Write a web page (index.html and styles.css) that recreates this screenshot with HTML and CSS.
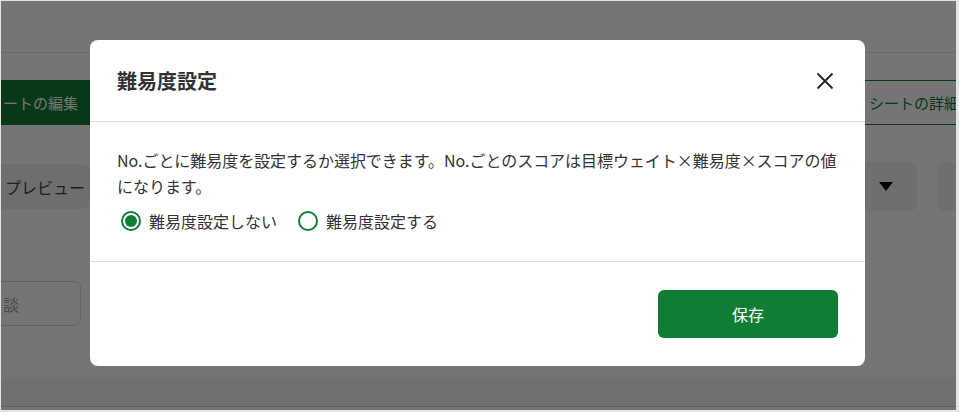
FILE: index.html
```html
<!DOCTYPE html>
<html lang="ja">
<head>
<meta charset="utf-8">
<title>難易度設定</title>
<link rel="stylesheet" href="styles.css">
</head>
<body>
<div class="page">
  <div class="bg">
    <div class="bg-header"></div>
    <div class="bg-tabs">
      <div class="tab tab-edit">ートの編集</div>
      <div class="tab tab-detail">シートの詳細</div>
    </div>
    <div class="bg-row">
      <div class="pill">プレビュー</div>
      <div class="bg-controls">
        <div class="select"><span class="caret"></span></div>
        <div class="box"></div>
      </div>
    </div>
    <div class="bg-input">談</div>
    <div class="bg-footer"></div>
  </div>

  <div class="overlay">
    <div class="modal" role="dialog" aria-labelledby="modal-title">
      <div class="modal-header">
        <h2 class="modal-title" id="modal-title">難易度設定</h2>
        <button class="close" aria-label="閉じる">
          <svg width="18" height="18" viewBox="0 0 18 18" aria-hidden="true">
            <path d="M1.5 1.5 L16.5 16.5 M16.5 1.5 L1.5 16.5" stroke="#222" stroke-width="1.8" fill="none"/>
          </svg>
        </button>
      </div>
      <div class="modal-body">
        <p class="desc">No.ごとに難易度を設定するか選択できます。No.ごとのスコアは目標ウェイト×難易度×スコアの値になります。</p>
        <div class="radios">
          <label class="radio-item"><span class="radio checked"></span><span class="radio-label">難易度設定しない</span></label>
          <label class="radio-item"><span class="radio"></span><span class="radio-label">難易度設定する</span></label>
        </div>
      </div>
      <div class="modal-footer">
        <button class="save">保存</button>
      </div>
    </div>
  </div>
</div>
</body>
</html>
```
FILE: styles.css
```css
html, body {
  margin: 0;
  padding: 0;
}
body {
  width: 959px;
  height: 412px;
  overflow: hidden;
  background: #e4e4e4;
  box-sizing: border-box;
  padding: 1px 3px 2px 1px;
  font-family: "Noto Sans CJK JP", "Noto Sans", sans-serif;
  color: #333;
}
.page {
  position: relative;
  height: 100%;
  overflow: hidden;
  background: #fff;
}
.bg {
  display: flex;
  flex-direction: column;
}
.bg-header {
  height: 51px;
  border-bottom: 1px solid #e6e6e6;
}
.bg-tabs {
  margin-top: 27px;
  display: grid;
  grid-template-columns: 480px 1fr;
  height: 45px;
  border-top: 1px solid #107c34;
  border-bottom: 1px solid #107c34;
  box-sizing: border-box;
  font-size: 15px;
}
.tab {
  display: flex;
  align-items: center;
  white-space: nowrap;
  overflow: hidden;
}
.tab-edit {
  background: #107c34;
  color: #fff;
  padding-left: 2px;
  margin-top: -1px;
  margin-bottom: -1px;
}
.tab-detail {
  color: #107c34;
  padding-left: 388px;
}
.bg-row {
  margin-top: 37px;
  height: 49px;
  display: flex;
  align-items: center;
  justify-content: space-between;
}
.pill {
  margin-left: -20px;
  height: 45px;
  width: 120px;
  padding-left: 24px;
  box-sizing: border-box;
  border-radius: 23px;
  background: #f0f0f0;
  display: flex;
  align-items: center;
  font-size: 16px;
  color: #444;
}
.bg-controls {
  display: flex;
  gap: 20px;
  margin-right: -21px;
  height: 49px;
}
.select {
  width: 200px;
  border-radius: 7px;
  background: #f1f1f1;
  display: flex;
  align-items: center;
  justify-content: flex-end;
  padding-right: 24px;
}
.caret {
  width: 0;
  height: 0;
  border-left: 7px solid transparent;
  border-right: 7px solid transparent;
  border-top: 9px solid #000;
}
.box {
  width: 40px;
  border-radius: 7px;
  background: #f1f1f1;
}
.bg-input {
  margin-top: 70px;
  margin-left: -12px;
  width: 92px;
  height: 45px;
  box-sizing: border-box;
  border: 1px solid #d6d6d6;
  border-radius: 7px;
  display: flex;
  align-items: center;
  padding-left: 13px;
  font-size: 16px;
  color: #a6a6a6;
}
.bg-footer {
  margin-top: 51px;
  height: 29px;
  background: #f3f3f3;
  border-bottom: 1px solid #cfcfcf;
}
.overlay {
  position: absolute;
  inset: 0;
  background: rgba(0, 0, 0, 0.54);
  display: flex;
  justify-content: center;
  align-items: flex-start;
  padding: 39px 2px 0 0;
}
.modal {
  width: 775px;
  background: #fff;
  border-radius: 8px;
  overflow: hidden;
}
.modal-header {
  height: 81px;
  border-bottom: 1px solid #dcdcdc;
  display: flex;
  align-items: center;
  justify-content: space-between;
  padding: 0 31px 0 27px;
}
.modal-title {
  margin: 0;
  font-size: 20px;
  font-weight: 700;
  color: #333;
  line-height: 1;
}
.close {
  border: 0;
  background: none;
  padding: 0;
  width: 18px;
  height: 18px;
  display: flex;
}
.modal-body {
  padding: 25px 18px 28px 27px;
  border-bottom: 1px solid #dcdcdc;
}
.desc {
  margin: 0;
  font-size: 16px;
  line-height: 26px;
  color: #333;
  letter-spacing: -0.04px;
}
.radios {
  margin-top: 10px;
  height: 24px;
  display: flex;
  align-items: center;
  gap: 17px;
}
.radio-item {
  display: flex;
  align-items: center;
  gap: 8px;
  font-size: 16px;
  color: #333;
  line-height: 24px;
}
.radio {
  width: 20px;
  height: 20px;
  margin-left: 4px;
  box-sizing: border-box;
  border: 2px solid #107c34;
  border-radius: 50%;
  display: flex;
  align-items: center;
  justify-content: center;
}
.radio.checked::after {
  content: "";
  width: 12px;
  height: 12px;
  border-radius: 50%;
  background: #107c34;
}
.modal-footer {
  padding: 28px 27px 28px;
  display: flex;
  justify-content: flex-end;
}
.save {
  width: 180px;
  height: 48px;
  border: 0;
  border-radius: 6px;
  background: #107c34;
  color: #fff;
  font-family: "Noto Sans CJK JP", "Noto Sans", sans-serif;
  font-size: 16px;
}
```
